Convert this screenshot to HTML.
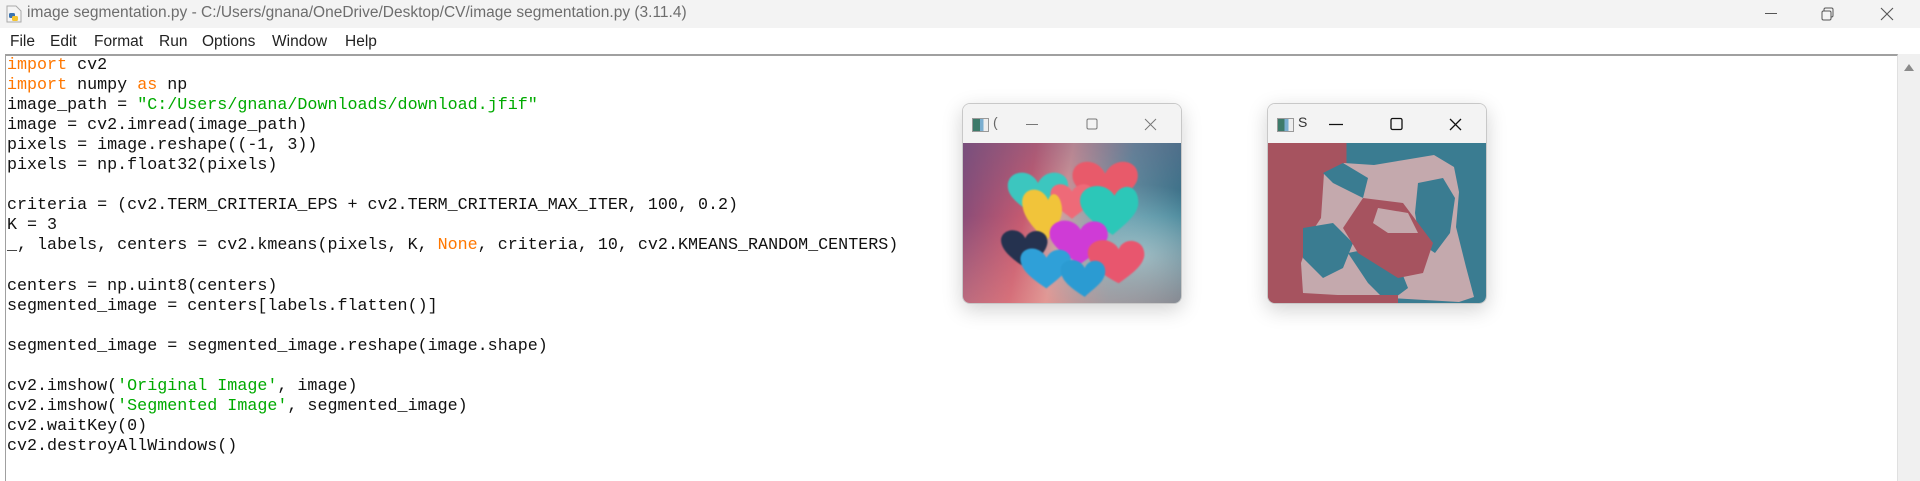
<!DOCTYPE html>
<html><head><meta charset="utf-8"><style>
*{margin:0;padding:0;box-sizing:border-box}
body{width:1920px;height:481px;background:#fff;position:relative;overflow:hidden;font-family:"Segoe UI","Liberation Sans",sans-serif}
#title{position:absolute;left:0;top:0;width:1920px;height:28px;background:#f3f3f3}
#title .t{position:absolute;left:27px;top:4px;font-size:15.5px;color:#6d6d6d}
#menu{position:absolute;left:0;top:28px;width:1920px;height:26px;background:#fff;font-size:15.5px;color:#222}
#menu span{position:absolute;top:5px}
#edit{position:absolute;left:5px;top:54px;width:1893px;height:427px;border-top:2px solid #a0a0a0;border-left:1px solid #a0a0a0;border-right:1px solid #e0e0e0}
#sb{position:absolute;left:1898px;top:54px;width:22px;height:427px;background:#f0f0f0}
pre{position:absolute;left:7px;top:56px;font-family:"Liberation Mono","Courier New",monospace;font-size:16.7px;line-height:20.05px;color:#111}
.k{color:#ff7700}.s{color:#00aa00}
.win{position:absolute;width:220px;height:201px;top:103px;border-radius:8px;overflow:hidden;border:1px solid #c8c8c8;box-shadow:0 6px 20px rgba(0,0,0,.18)}
.wt{height:39px;background:#f3f3f3;position:relative}
.ic{position:absolute;left:9px;top:14px;width:17px;height:14px;border:1px solid #999;background:linear-gradient(90deg,#3d7a6a 0 45%,#7aaed0 45% 70%,#eee 70%)}
.img{height:162px;position:relative;overflow:hidden}
</style></head><body>
<div id="title"><svg style="position:absolute;left:6px;top:5px" width="16" height="18" viewBox="0 0 16 18"><path d="M1 1h9l5 5v11H1z" fill="#f4f4f4" stroke="#aaa"/><rect x="3" y="8" width="6" height="5" rx="1.5" fill="#3a73b0"/><rect x="6" y="11" width="6" height="5" rx="1.5" fill="#f4c430"/></svg><span class="t">image segmentation.py - C:/Users/gnana/OneDrive/Desktop/CV/image segmentation.py (3.11.4)</span>
<svg style="position:absolute;left:1760px;top:5px" width="160" height="20"><line x1="5" y1="8.5" x2="17" y2="8.5" stroke="#555"/><rect x="62" y="6" width="9" height="9" rx="1.5" fill="none" stroke="#555"/><path d="M64 6V4.5a1.5 1.5 0 0 1 1.5-1.5h6a1.5 1.5 0 0 1 1.5 1.5v6a1.5 1.5 0 0 1-1.5 1.5H71" fill="none" stroke="#555"/><path d="M121 3l12 12M133 3l-12 12" stroke="#555" stroke-width="1.1"/></svg></div>
<div id="menu"><span style="left:10px">File</span><span style="left:50px">Edit</span><span style="left:94px">Format</span><span style="left:159px">Run</span><span style="left:202px">Options</span><span style="left:272px">Window</span><span style="left:345px">Help</span></div>
<div id="edit"></div>
<div id="sb"><svg style="position:absolute;left:5px;top:8px" width="12" height="10"><path d="M1 9L6 2l5 7z" fill="#8a8a8a"/></svg></div>
<pre><span class="k">import</span> cv2
<span class="k">import</span> numpy <span class="k">as</span> np
image_path = <span class="s">"C:/Users/gnana/Downloads/download.jfif"</span>
image = cv2.imread(image_path)
pixels = image.reshape((-1, 3))
pixels = np.float32(pixels)

criteria = (cv2.TERM_CRITERIA_EPS + cv2.TERM_CRITERIA_MAX_ITER, 100, 0.2)
K = 3
_, labels, centers = cv2.kmeans(pixels, K, <span class="k">None</span>, criteria, 10, cv2.KMEANS_RANDOM_CENTERS)

centers = np.uint8(centers)
segmented_image = centers[labels.flatten()]

segmented_image = segmented_image.reshape(image.shape)

cv2.imshow(<span class="s">'Original Image'</span>, image)
cv2.imshow(<span class="s">'Segmented Image'</span>, segmented_image)
cv2.waitKey(0)
cv2.destroyAllWindows()</pre>

<div class="win" style="left:962px">
<div class="wt"><div class="ic"></div><span style="position:absolute;left:30px;top:10px;font-size:14px;color:#666">(</span>
<svg style="position:absolute;left:60px;top:13px" width="150" height="16"><line x1="3" y1="7.5" x2="15" y2="7.5" stroke="#777"/><rect x="64" y="2" width="10" height="10" rx="1.5" fill="none" stroke="#777"/><path d="M122 2l11 11M133 2l-11 11" stroke="#777"/></svg></div>
<div class="img" style="background:radial-gradient(ellipse at 80% 70%,#8cc4cf 0,transparent 45%),linear-gradient(100deg,#7e4a7a 0,#c65a70 30%,#d89a9a 45%,#5f8fa0 70%,#2a6c83 100%)">
<div style="position:absolute;inset:0;background:linear-gradient(180deg,rgba(110,90,130,.35),transparent 45%,rgba(240,150,140,.4))"></div>
<svg width="220" height="162" style="position:absolute;left:0;top:0;filter:blur(0.8px)" viewBox="0 0 220 162">
<g transform="translate(24,6) scale(0.85)">
<path d="M110 60c-12-25-48-18-42 8 4 14 25 25 42 40 17-15 38-26 42-40 6-26-30-33-42-8z" fill="#e85a6a" transform="translate(40,-25) scale(.9)"/>
<path d="M60 40c-10-20-40-14-35 8 3 12 20 22 35 34 14-12 32-22 35-34 5-22-25-28-35-8z" fill="#3cc6bf"/>
<path d="M100 50c-8-14-28-10-25 6 2 10 15 18 25 26 10-8 23-16 25-26 3-16-17-20-25-6z" fill="#ee6a78"/>
<path d="M72 60c-9-20-35-14-30 8 2 14 14 26 28 40 10-14 20-26 18-40-2-16-12-20-16-8z" fill="#f1c43a"/>
<path d="M150 55c-12-20-45-12-40 10 3 14 22 26 38 36 14-12 30-24 30-38 0-22-20-24-28-8z" fill="#2cc7b8"/>
<path d="M110 95c-10-18-40-12-36 8 3 12 20 24 36 32 14-10 30-20 32-32 2-20-24-24-32-8z" fill="#cf3bd6"/>
<path d="M45 105c-8-16-32-10-28 6 3 12 18 22 30 30 10-10 22-18 24-30 2-16-20-20-26-6z" fill="#25324f"/>
<path d="M70 128c-10-18-35-12-30 6 3 12 18 22 30 30 12-10 24-18 28-30 4-16-20-22-28-6z" fill="#2fa0d8"/>
<path d="M155 118c-10-18-40-12-36 8 3 12 20 24 36 32 14-10 28-20 30-32 2-20-24-24-30-8z" fill="#e8566e"/>
<path d="M115 140c-8-16-32-10-28 6 3 12 16 20 28 28 10-10 22-16 24-28 2-16-18-20-24-6z" fill="#2b9bd2"/>
</g></svg></div></div>

<div class="win" style="left:1267px">
<div class="wt"><div class="ic"></div><span style="position:absolute;left:30px;top:10px;font-size:14px;color:#333">S</span>
<svg style="position:absolute;left:58px;top:13px" width="150" height="16"><line x1="3" y1="7.5" x2="17" y2="7.5" stroke="#111" stroke-width="1.3"/><rect x="65" y="1.5" width="11" height="11" rx="1.5" fill="none" stroke="#111" stroke-width="1.3"/><path d="M124 2l11 11M135 2l-11 11" stroke="#111" stroke-width="1.3"/></svg></div>
<div class="img" style="background:linear-gradient(90deg,#a6535f 0 36%,#3a7c91 36%)">
<svg width="220" height="162" style="position:absolute;left:0;top:0" viewBox="0 0 220 162">
<path d="M35 150l-2-30 10-30 10-15 3-45 20-10 30 2 30-5 30-5 20 12 5 25-3 35 10 40 8 30-15 5z" fill="#c4a9ad"/>
<path d="M55 30l20-10 25 15-5 20-30-15z" fill="#3a7c91"/>
<path d="M150 40l25-5 12 20-5 35-15 20-15-10-5-30z" fill="#3a7c91"/>
<path d="M35 85l30-5 20 20-10 25-20 10-20-20z" fill="#3a7c91"/>
<path d="M80 110l25-5 25 15 10 25-20 15-20-20z" fill="#3a7c91"/>
<path d="M95 55l40 5 30 40-10 30-25 5-40-25-15-25z" fill="#a6535f"/>
<path d="M110 65l30 5 10 20-30 0-15-10z" fill="#c4a9ad"/>
<path d="M0 152h130v10H0z" fill="#a6535f"/>
</svg></div></div>
</body></html>
